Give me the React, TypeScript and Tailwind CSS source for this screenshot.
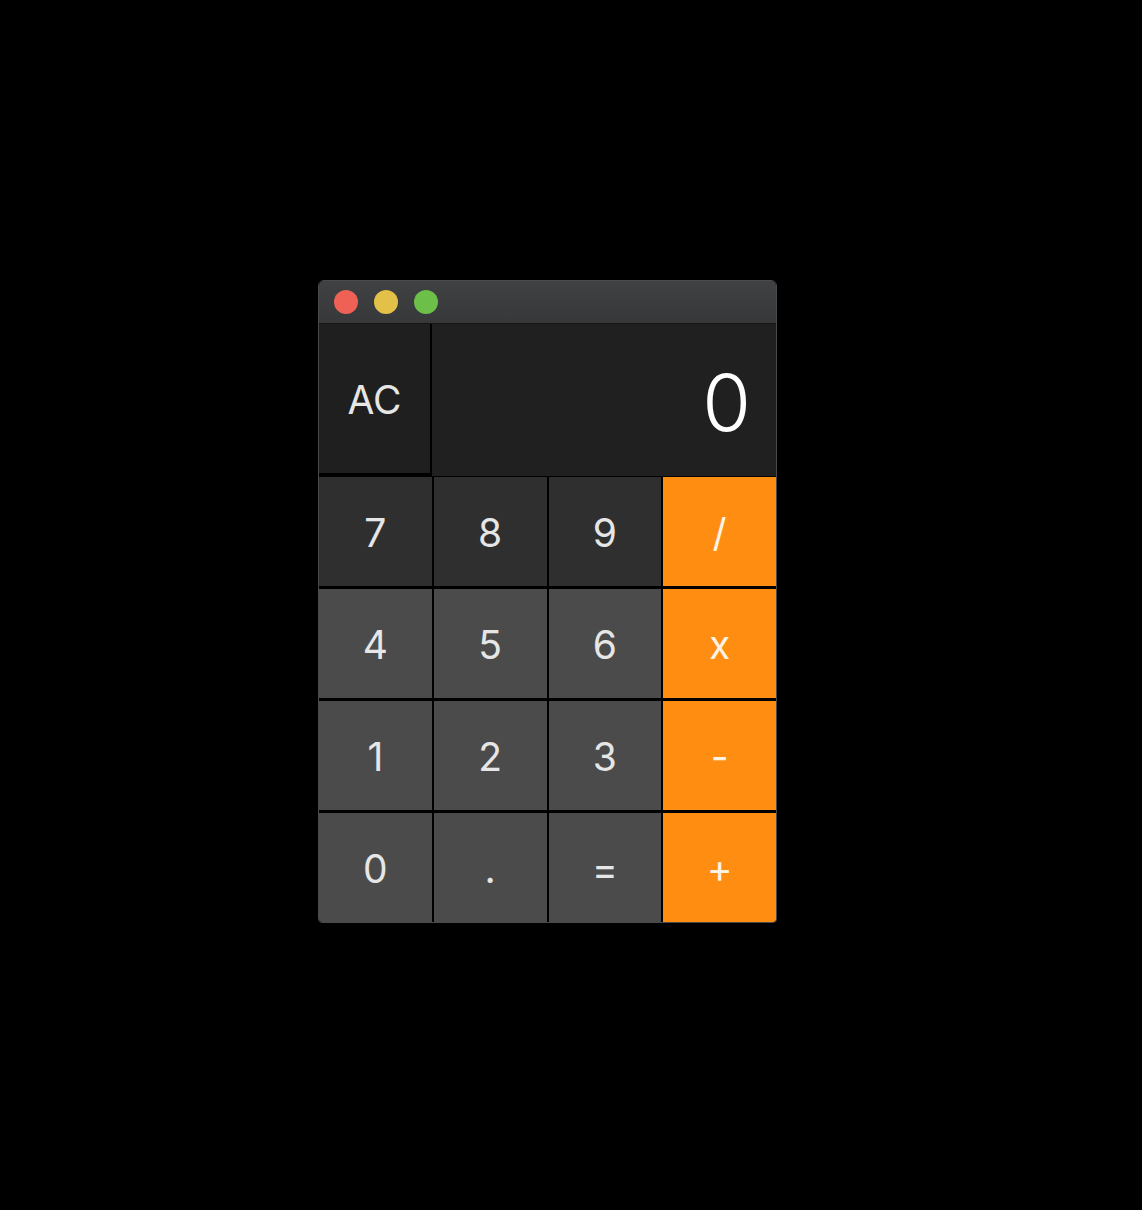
import React from "react";

const rows: { label: string; tone: "dark" | "mid" | "op" }[][] = [
  [
    { label: "7", tone: "dark" },
    { label: "8", tone: "dark" },
    { label: "9", tone: "dark" },
    { label: "/", tone: "op" },
  ],
  [
    { label: "4", tone: "mid" },
    { label: "5", tone: "mid" },
    { label: "6", tone: "mid" },
    { label: "x", tone: "op" },
  ],
  [
    { label: "1", tone: "mid" },
    { label: "2", tone: "mid" },
    { label: "3", tone: "mid" },
    { label: "-", tone: "op" },
  ],
  [
    { label: "0", tone: "mid" },
    { label: ".", tone: "mid" },
    { label: "=", tone: "mid" },
    { label: "+", tone: "op" },
  ],
];

const toneClass = {
  dark: "bg-[#2f2f2f] text-[#e6e6e6]",
  mid: "bg-[#4b4b4b] text-[#e6e6e6]",
  op: "bg-[#fe8d12] text-[#fff3e3]",
};

export default function App() {
  return (
    <div
      className="min-h-[1210px] w-full bg-black pl-[318px] pt-[280px]"
      style={{ fontFamily: "Inter, 'Liberation Sans', sans-serif" }}
    >
      <div className="w-[459px] overflow-hidden rounded-t-[6px] rounded-b-[4px] border border-[#4a4a4c]">
        {/* title bar */}
        <div className="flex h-[43px] items-center gap-4 border-b border-[#161616] bg-gradient-to-b from-[#404143] to-[#37383a] pl-[15px]">
          <span className="h-6 w-6 rounded-full bg-[#ef6155]" />
          <span className="h-6 w-6 rounded-full bg-[#e3c048]" />
          <span className="h-6 w-6 rounded-full bg-[#6cc04a]" />
        </div>

        {/* display row */}
        <div className="flex h-[153px] bg-black">
          <button className="flex h-[152px] w-[113px] items-center justify-center border-r-2 border-b-[3px] border-black bg-[#1f1f1f] pt-[3px] text-[39px] text-[#e6e6e6]">
            AC
          </button>
          <div className="flex h-[152px] flex-1 items-center justify-end bg-[#202020] pt-[5px] pr-[25px] text-[79px] font-light leading-none text-white">
            0
          </div>
        </div>

        {/* keypad */}
        <div className="grid grid-cols-4 gap-x-[2px] gap-y-[3px] bg-black">
          {rows.flat().map((key) => (
            <button
              key={key.label}
              className={`flex h-[109px] items-center justify-center pt-[2px] text-[39px] leading-none ${toneClass[key.tone]}`}
            >
              {key.label}
            </button>
          ))}
        </div>
      </div>
    </div>
  );
}
